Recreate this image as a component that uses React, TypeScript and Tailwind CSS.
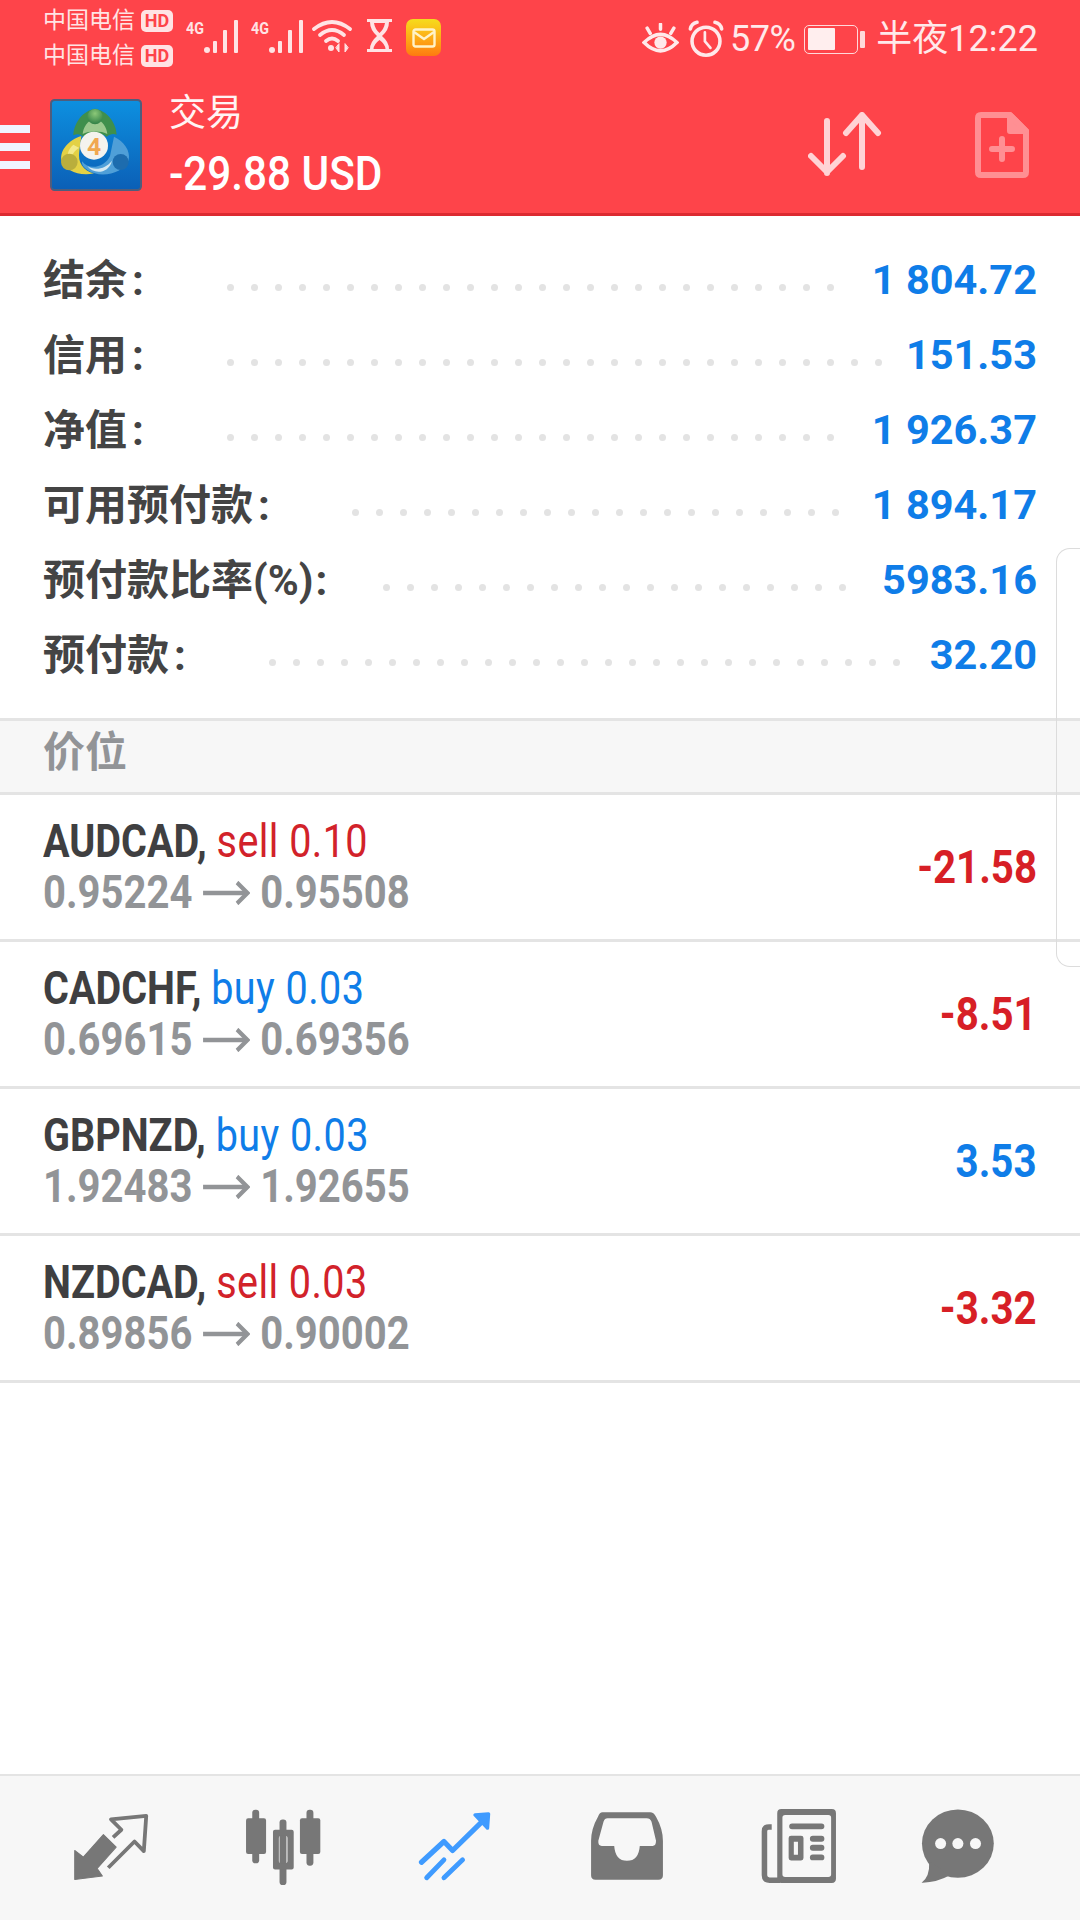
import React from 'react';

const font = 'font-["Roboto","Noto_Sans_CJK_SC",sans-serif]';

const summary = [
  { label: '结余', colon: 'ml-[5px]', value: '1 804.72', dots: 26, gap: 'ml-[83px]' },
  { label: '信用', colon: 'ml-[5px]', value: '151.53', dots: 28, gap: 'ml-[83px]' },
  { label: '净值', colon: 'ml-[5px]', value: '1 926.37', dots: 26, gap: 'ml-[83px]' },
  { label: '可用预付款', colon: 'ml-[5px]', value: '1 894.17', dots: 21, gap: 'ml-[82px]' },
  { label: '预付款比率(%)', colon: 'ml-[2px]', value: '5983.16', dots: 20, gap: 'ml-[56px]' },
  { label: '预付款', colon: 'ml-[5px]', value: '32.20', dots: 27, gap: 'ml-[83px]' },
];

const positions = [
  { symbol: 'AUDCAD,', side: 'sell 0.10', sell: true, prices: '0.95224', to: '0.95508', profit: '-21.58' },
  { symbol: 'CADCHF,', side: 'buy 0.03', sell: false, prices: '0.69615', to: '0.69356', profit: '-8.51' },
  { symbol: 'GBPNZD,', side: 'buy 0.03', sell: false, prices: '1.92483', to: '1.92655', profit: '3.53' },
  { symbol: 'NZDCAD,', side: 'sell 0.03', sell: true, prices: '0.89856', to: '0.90002', profit: '-3.32' },
];

function Carrier() {
  return (
    <div className="flex items-center h-[35px]">
      <span className="text-[23px] leading-none text-[#ffe3e4]">中国电信</span>
      <span className="ml-[6px] w-[32px] h-[22px] rounded-[5px] bg-[#ffe3e4] text-[#fe444a] text-[18px] leading-[22px] font-bold text-center">
        HD
      </span>
    </div>
  );
}

function Signal() {
  return (
    <svg width="52" height="35" viewBox="0 0 52 35" fill="#ffe3e4">
      <text x="0" y="15" fontSize="16" fontWeight="700" fontFamily="Roboto" textLength="18" lengthAdjust="spacingAndGlyphs">4G</text>
      <circle cx="21" cy="31" r="3" />
      <rect x="27" y="22" width="4" height="12" rx="1" />
      <rect x="37" y="11" width="4" height="23" rx="1" />
      <rect x="48" y="1" width="4" height="33" rx="1" />
    </svg>
  );
}

function StatusLeftIcons() {
  return (
    <div className="flex items-start ml-[13px] mt-[19px]">
      <Signal />
      <div className="ml-[13px]">
        <Signal />
      </div>
      <svg className="ml-[8px]" width="42" height="34" viewBox="0 0 40 34" fill="none" stroke="#ffe3e4" strokeWidth="3.8" strokeLinecap="round">
        <path d="M2 10 Q20 -4 38 10" />
        <path d="M8 16 Q20 6 32 16" />
        <path d="M14 22 Q20 17 26 22" />
        <circle cx="19" cy="29" r="3" fill="#ffe3e4" stroke="none" />
        <path d="M27 25 L27 33 L24 29Z M33 25 L33 33 L36 29Z" fill="#ffe3e4" strokeWidth="1" />
      </svg>
      <svg className="ml-[14px]" width="25" height="34" viewBox="0 0 25 34" fill="#ffe3e4">
        <path d="M0 0 H25 V3 H22 Q22 11 15 17 Q22 23 22 30 H25 V33 H0 V30 H3 Q3 23 10 17 Q3 11 3 3 H0Z M7 4 Q8 10 12.500 14 Q17 10 18 4Z M12.500 21 Q7 25 6.500 30 H18.500 Q18 25 12.500 21Z" fillRule="evenodd" />
      </svg>
      <div className="ml-[14px] w-[35px] h-[37px] rounded-[7px] bg-gradient-to-b from-[#f5dc1c] to-[#fe7a10] flex items-center justify-center">
        <svg width="24" height="20" viewBox="0 0 24 20" fill="none" stroke="#fff3c8" strokeWidth="2.4">
          <rect x="1.500" y="1.500" width="21" height="17" rx="2" />
          <path d="M2 4 L12 11 L22 4" />
        </svg>
      </div>
    </div>
  );
}

function StatusRightIcons() {
  return (
    <div className="flex items-center text-[#ffe9ea]">
      <svg width="37" height="33" viewBox="0 0 36 32" fill="none" stroke="currentColor" strokeWidth="3.4" strokeLinecap="round">
        <path d="M2 19 Q18 3 34 19 Q18 35 2 19Z" />
        <circle cx="18" cy="19" r="6" fill="currentColor" stroke="none" />
        <path d="M5 5 L8 10 M18 1 V6 M31 5 L28 10" />
      </svg>
      <svg className="ml-[9px]" width="36" height="38" viewBox="0 0 32 34" fill="none" stroke="currentColor" strokeWidth="3.2" strokeLinecap="round">
        <circle cx="16" cy="19" r="12.500" />
        <path d="M15 11 V19 L20 25" strokeWidth="2.400" />
        <path d="M2 8 Q3 3 8 2 M30 8 Q29 3 24 2" />
      </svg>
      <span className="ml-[6px] text-[36px] leading-none tracking-[-0.5px]">57%</span>
      <div className="ml-[9px] w-[54px] h-[29px] rounded-[5px] border-[1.5px] border-[#ffd9da] p-[2.500px] flex">
        <div className="w-[27px] bg-[#ffeeee] rounded-[1px]" />
      </div>
      <div className="ml-[2px] w-[5px] h-[17px] rounded-[1px] bg-[#ffd9da]" />
      <span className="ml-[11px] text-[36px] leading-none">半夜12:22</span>
    </div>
  );
}

function MtLogo() {
  return (
    <svg width="92" height="92" viewBox="150 23 276 276" className="shrink-0">
      <defs>
        <linearGradient id="sky" x1="0" y1="0" x2="0" y2="1">
          <stop offset="0" stopColor="#0d90e0" />
          <stop offset="1" stopColor="#0b5fb6" />
        </linearGradient>
        <radialGradient id="leaf" cx="0.5" cy="0.3" r="0.7">
          <stop offset="0" stopColor="#8cc878" />
          <stop offset="1" stopColor="#2f7f45" />
        </radialGradient>
      </defs>
      <rect x="153" y="26" width="270" height="270" rx="11" fill="url(#sky)" stroke="#4f5d7c" strokeWidth="6" />
      {/* green figure */}
      <path d="M285 52 C250 58 222 92 220 132 C232 126 242 128 250 136 C262 122 306 122 320 136 C330 128 340 126 350 130 C348 92 320 58 285 52Z" fill="#3f8f4c" />
      <path d="M285 80 C262 88 250 108 248 128 C265 118 305 118 322 128 C320 108 308 88 285 80Z" fill="#9cc98e" />
      <circle cx="285" cy="76" r="23" fill="url(#leaf)" />
      {/* yellow figure */}
      <path d="M244 134 C206 146 180 176 184 206 C194 236 236 256 282 246 C250 238 232 214 238 178Z" fill="#e3d145" />
      <path d="M220 160 C202 176 198 196 212 206 C216 190 224 176 238 170Z" fill="#f3e98a" />
      <circle cx="208" cy="212" r="25" fill="#b9ae3c" />
      {/* blue figure */}
      <path d="M342 136 C372 150 392 178 386 206 C372 240 322 258 284 246 C252 236 244 220 246 210 C268 240 316 226 330 194Z" fill="#4f9fd8" />
      <path d="M262 224 C284 240 318 232 336 208 C326 248 280 250 262 224Z" fill="#d6e9f2" />
      <circle cx="362" cy="212" r="24" fill="#1d6cae" />
      <circle cx="282" cy="163" r="42" fill="#f4f3ee" />
      <text x="282" y="190" textAnchor="middle" fontSize="74" fontWeight="700" fontFamily="Roboto" fill="#f0a850">4</text>
    </svg>
  );
}

function Header() {
  return (
    <header className="h-[216px] bg-[#fe444a] border-b-[3px] border-[#dc2a30] text-white">
      <div className="h-[72px] flex items-start">
        <div className="pl-[43px] pt-[3px] flex flex-col">
          <Carrier />
          <Carrier />
        </div>
        <StatusLeftIcons />
        <div className="ml-auto pr-[42px] pt-[20px]">
          <StatusRightIcons />
        </div>
      </div>
      <div className="flex items-center pt-[12px]">
        <div className="w-[30px] flex flex-col gap-[10px] mt-[3px]">
          <div className="h-[8px] bg-[#f0f4ff]" />
          <div className="h-[8px] bg-[#f0f4ff]" />
          <div className="h-[8px] bg-[#f0f4ff]" />
        </div>
        <div className="ml-[20px]">
          <MtLogo />
        </div>
        <div className="ml-[27px] pt-[2px] flex flex-col">
          <span className="text-[37px] leading-[56px] text-[#fff4f4]">交易</span>
          <span className="text-[48px] leading-[64px] font-medium origin-left scale-x-[0.88] whitespace-nowrap">-29.88 USD</span>
        </div>
        <svg className="ml-auto" width="76" height="66" viewBox="0 0 76 66" fill="none" stroke="#ffd3d5" strokeWidth="6" strokeLinecap="round" strokeLinejoin="round">
          <path d="M19 9 V61 M3 44 L19 60 L35 44" />
          <path d="M54 3 V55 M38 21 L54 3 L70 21" />
        </svg>
        <svg className="ml-[91px] mr-[51px]" width="54" height="66" viewBox="0 0 54 66" fill="none" stroke="#ff8f93" strokeWidth="6" strokeLinejoin="round">
          <path d="M3 6 Q3 3 6 3 H35 L51 19 V60 Q51 63 48 63 H6 Q3 63 3 60Z" />
          <path d="M35 3 L51 19 H35Z" fill="#ff8f93" />
          <path d="M27 27 V47 M17 37 H37" strokeLinecap="round" />
        </svg>
      </div>
    </header>
  );
}

function SummaryRow({ label, colon, value, dots, gap }: (typeof summary)[number]) {
  return (
    <div className="h-[75px] flex items-center">
      <span className="text-[42px] leading-none font-bold text-[#444444] whitespace-nowrap">
        {label}
        <span className={colon}>:</span>
      </span>
      <div className={`${gap} flex gap-[17px] mt-[14px]`}>
        {Array.from({ length: dots }).map((_, i) => (
          <span key={i} className="w-[7px] h-[7px] rounded-full bg-[#e3e3e3]" />
        ))}
      </div>
      <span className="ml-auto -mt-[2px] text-[41.5px] leading-none font-bold text-[#0f7de8] whitespace-pre">{value}</span>
    </div>
  );
}

function PositionRow({ symbol, side, sell, prices, to, profit }: (typeof positions)[number]) {
  const up = profit[0] !== '-';
  return (
    <div className="h-[147px] border-b-[3px] border-[#e4e4e4] flex items-center pl-[43px] pr-[43px]">
      <div className="flex flex-col text-[46px] leading-[51px]">
        <div className="origin-left scale-x-[0.86] whitespace-nowrap">
          <span className="font-bold text-[#3f3f41]">{symbol}</span>{' '}
          <span className={`tracking-[0.5px] ${sell ? 'text-[#d2222a]' : 'text-[#0f7de8]'}`}>{side}</span>
        </div>
        <div className="origin-left scale-x-[0.87] whitespace-nowrap font-bold text-[#929497] flex items-center">
          <span>{prices}</span>
          <svg className="mx-[12px]" width="54" height="24" viewBox="0 0 54 24" fill="none" stroke="#929497" strokeWidth="4.500">
            <path d="M0 12 H51" />
            <path d="M39 1.500 L51 12 L39 22.500" />
          </svg>
          <span>{to}</span>
        </div>
      </div>
      <span
        className={`ml-auto origin-right scale-x-[0.875] text-[46px] leading-none font-bold ${up ? 'text-[#0f7de8]' : 'text-[#d71f26]'}`}
      >
        {profit}
      </span>
    </div>
  );
}

const navIcon = 'w-[114px] h-[83px]';

function BottomNav() {
  return (
    <nav className="h-[146px] bg-[#f7f7f7] border-t-[2px] border-[#e4e4e4] pt-[33px]">
      <div className="ml-[25px] w-[1032px] grid grid-cols-6 justify-items-center">
        <svg className={navIcon} viewBox="155 148 330 240" fill="none" stroke="#777777" strokeLinejoin="round">
          <path d="M215 268 L240 287 L298 222 L335 258 L280 320 L295 342 L215 352Z" fill="#777777" strokeWidth="3" />
          <path d="M326 230 L350 208 L320 178 L422 168 L415 270 L388 242 L312 318" strokeWidth="11" />
        </svg>
        <svg className={navIcon} viewBox="652 148 330 240" fill="#777777">
          <rect x="728" y="150" width="20" height="155" rx="9" />
          <rect x="710" y="175" width="58" height="103" rx="6" />
          <rect x="807" y="178" width="20" height="190" rx="9" />
          <path fillRule="evenodd" d="M794 208 H842 Q848 208 848 214 V317 Q848 323 842 323 H794 Q788 323 788 317 V214 Q788 208 794 208Z M811 225 Q805 225 805 231 V299 Q805 305 811 305 H824 Q830 305 830 299 V231 Q830 225 824 225Z" />
          <rect x="885" y="150" width="20" height="162" rx="9" />
          <rect x="866" y="175" width="59" height="103" rx="6" />
        </svg>
        <svg className={navIcon} viewBox="1152 148 330 240" fill="none" stroke="#3f9bff" strokeLinecap="round" strokeLinejoin="round">
          <path d="M1220 302 L1285 242 L1310 268 L1405 175" strokeWidth="15" />
          <path d="M1375 165 L1414 162 L1411 203Z" fill="#3f9bff" strokeWidth="10" />
          <path d="M1235 347 L1285 295 M1285 347 L1339 295" strokeWidth="14" />
        </svg>
        <svg className={navIcon} viewBox="86 148 330 240" fill="#777777">
          <path fillRule="evenodd" d="M180 157 H318 Q328 157 335 170 Q355 205 355 240 V340 Q355 353 342 353 H160 Q147 353 147 340 V240 Q147 205 167 170 Q172 157 180 157Z M195 175 Q186 175 183 185 L168 240 Q167 255 178 255 H214 Q217 298 251 298 Q285 298 288 255 H325 Q335 255 335 240 L322 185 Q318 175 308 175Z" />
        </svg>
        <svg className={navIcon} viewBox="590 148 330 240" fill="#777777">
          <path fillRule="evenodd" d="M704 148 H850 Q862 148 862 160 V350 Q862 362 850 362 H704 Q692 362 692 350 V160 Q692 148 704 148Z M715 165 Q707 165 707 173 V337 Q707 345 715 345 H840 Q848 345 848 337 V173 Q848 165 840 165Z" />
          <path d="M676 200 H668 Q655 200 655 212 V340 Q655 354 670 354 H700" fill="none" stroke="#777777" strokeWidth="16" />
          <path d="M735 198 H820 M795 234 H820 M795 260 H820 M795 288 H820" stroke="#777777" strokeWidth="17" strokeLinecap="round" />
          <path fillRule="evenodd" d="M732 225 H761 Q768 225 768 232 V290 Q768 297 761 297 H732 Q725 297 725 290 V232 Q725 225 732 225Z M740 243 V280 H752 V243Z" />
        </svg>
        <svg className={navIcon} viewBox="1086 148 330 240" fill="#777777">
          <ellipse cx="1213" cy="248" rx="104" ry="99" />
          <path d="M1130 300 Q1132 345 1108 361 Q1150 362 1190 340Z" />
          <circle cx="1163" cy="248" r="16" fill="#f7f7f7" />
          <circle cx="1213" cy="248" r="16" fill="#f7f7f7" />
          <circle cx="1264" cy="248" r="16" fill="#f7f7f7" />
        </svg>
      </div>
    </nav>
  );
}

export default function App() {
  return (
    <div className={`relative w-[1080px] h-[1920px] bg-white flex flex-col overflow-hidden ${font}`}>
      <Header />
      <section className="pt-[27px] pb-[25px] pl-[43px] pr-[43px]">
        {summary.map((row) => (
          <SummaryRow key={row.label} {...row} />
        ))}
      </section>
      <div className="h-[77px] bg-[#f7f7f7] border-y-[3px] border-[#e4e4e4] pl-[43px] pb-[7px] flex items-center">
        <span className="text-[42px] leading-none font-bold text-[#929497]">价位</span>
      </div>
      {positions.map((p) => (
        <PositionRow key={p.symbol} {...p} />
      ))}
      <div className="flex-1" />
      <BottomNav />
      {/* edge handle laid over the list */}
      <div className="absolute top-[548px] right-0 w-[24px] h-[419px] rounded-l-[14px] border border-r-0 border-[#dcdcdc]" />
    </div>
  );
}
